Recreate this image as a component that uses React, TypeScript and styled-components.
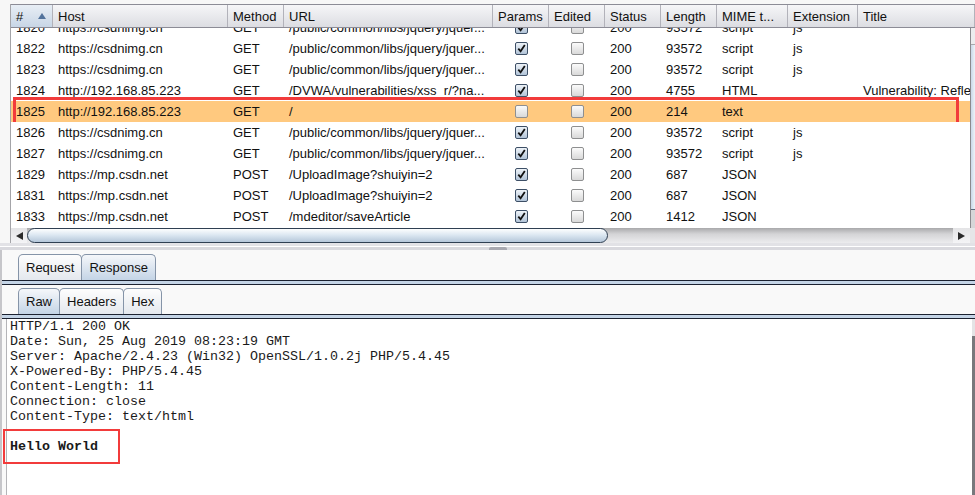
import React from "react";
import styled, { createGlobalStyle } from "styled-components";

const GlobalStyle = createGlobalStyle`
  html, body {
    margin: 0;
    padding: 0;
    background: #f9f9f9;
  }
  body {
    width: 975px;
    height: 495px;
    overflow: hidden;
    font-family: "Liberation Sans", Arial, sans-serif;
  }
  * {
    box-sizing: border-box;
  }
`;

const COLS = "42px 175px 56px 209px 56px 56px 56px 56px 71px 70px 1fr";

const Page = styled.div`
  width: 975px;
  height: 495px;
  display: flex;
  flex-direction: column;
  overflow: hidden;
`;

// 위쪽 히스토리 테이블
const TablePane = styled.div`
  height: 243px;
  padding: 4px 0 0 10px;
  background: #f7f7f7;
  display: flex;
  flex-direction: column;
`;
const Table = styled.div`
  flex: 1;
  display: flex;
  flex-direction: column;
  border-left: 1px solid #a4a4a8;
  background: #fff;
  min-height: 0;
`;
const HeaderRow = styled.div`
  display: grid;
  grid-template-columns: ${COLS};
  height: 24px;
  border-top: 1px solid #8c8c96;
  border-bottom: 1px solid #8c8c96;
  background: linear-gradient(#f6f6f8, #dcdde2);
`;
const HeaderCell = styled.div<{ $sorted?: boolean }>`
  display: flex;
  align-items: center;
  justify-content: space-between;
  padding: 0 6px 0 5px;
  font-size: 13px;
  color: #111;
  white-space: nowrap;
  overflow: hidden;
  border-right: 1px solid #b2b2ba;
  background: ${(p) =>
    p.$sorted ? "linear-gradient(#e8eef5, #c8d6e6)" : "transparent"};
`;
const Body = styled.div`
  height: 200px;
  display: flex;
`;
const Viewport = styled.div`
  flex: 1;
  overflow: hidden;
`;
const RowList = styled.div`
  margin-top: -11px;
`;
const Row = styled.div<{ $selected?: boolean }>`
  display: grid;
  grid-template-columns: ${COLS};
  height: 21px;
  align-items: center;
  position: relative;
  background: ${(p) => (p.$selected ? "#ffc97f" : "#fff")};
  ${(p) =>
    p.$selected &&
    `
    &::after {
      content: "";
      position: absolute;
      left: 2px;
      top: -4px;
      width: 940px;
      height: 28px;
      border: 3px solid #f23b3b;
    }
  `}
`;
const Cell = styled.div`
  padding-left: 5px;
  font-size: 13px;
  line-height: 21px;
  color: #111;
  white-space: nowrap;
  overflow: hidden;
`;
const CheckCell = styled.div`
  display: flex;
  align-items: center;
  justify-content: center;
`;
const Check = styled.span<{ $on: boolean }>`
  width: 13px;
  height: 13px;
  border-radius: 2px;
  display: inline-flex;
  align-items: center;
  justify-content: center;
  border: 1px solid ${(p) => (p.$on ? "#3d4f66" : "#8e8f90")};
  background: ${(p) =>
    p.$on
      ? "linear-gradient(#eef3f8, #b2c4d8)"
      : "linear-gradient(#fbfbfb, #d9d9d9)"};
`;
const VScroll = styled.div`
  width: 5px;
  border-left: 1px solid #8a8a8e;
  display: flex;
  flex-direction: column;
  background: #d6d6d8;
`;
const VScrollButton = styled.div`
  height: 17px;
  background: #ececee;
  border-bottom: 1px solid #a8a8ac;
`;
const VScrollThumb = styled.div`
  height: 165px;
  background: linear-gradient(90deg, #c9d8e8, #eef3f8);
  border-bottom: 1px solid #5a6a7c;
`;
const HScroll = styled.div`
  height: 15px;
  display: flex;
  background: linear-gradient(#a9a9ab, #d4d4d6 40%, #ececee);
`;
const ArrowButton = styled.div<{ $w: number }>`
  width: ${(p) => p.$w}px;
  display: flex;
  align-items: center;
  justify-content: center;
  background: linear-gradient(#e4e4e6, #f4f4f6);
`;
const HThumb = styled.div`
  width: 581px;
  border: 1px solid #2f3f52;
  border-radius: 8px;
  background: linear-gradient(#fdfefe, #dde8f2 45%, #b5c7da);
`;
const HTrack = styled.div`
  flex: 1;
`;
const Corner = styled.div`
  width: 5px;
  background: #e6e6e8;
`;

// 가운데 구분선
const Divider = styled.div`
  height: 7px;
  display: flex;
  background: linear-gradient(#e2e2e6 0 3px, #fff 3px 4px, #d9d9de 4px);
`;
const Handle = styled.div`
  width: 18px;
  height: 3px;
  margin: 4px 0 0 489px;
  border-radius: 2px 2px 0 0;
  background: #a8a8b0;
`;

// 아래쪽 Request / Response
const BottomPane = styled.div`
  flex: 1;
  display: flex;
  flex-direction: column;
  padding-top: 4px;
  background: #f9f9f9;
  border-left: 2px solid #c6c6ca;
  min-height: 0;
`;
const TabBar = styled.div`
  display: flex;
  height: 26px;
  padding-left: 16px;
`;
const Tab = styled.div<{ $active?: boolean }>`
  height: 26px;
  padding: 0 7px;
  margin-right: -1px;
  border: 1px solid #8594a8;
  border-bottom: none;
  border-radius: 5px 5px 0 0;
  font-size: 13px;
  line-height: 25px;
  color: #111;
  background: ${(p) =>
    p.$active
      ? "linear-gradient(#f5f7fa, #c4d4e6)"
      : "linear-gradient(#fdfdfd, #e4e8ee)"};
`;
const TabRule = styled.div<{ $gap: number }>`
  height: 5px;
  border-top: 1px solid #1b2130;
  border-bottom: 1px solid #1b2130;
  background: #c4d4e6;
  margin-bottom: ${(p) => p.$gap}px;
`;
const Content = styled.div`
  flex: 1;
  display: flex;
  margin-left: 4px;
  border-left: 1px solid #b4b4b8;
  background: #fff;
  min-height: 0;
`;
const Raw = styled.pre`
  flex: 1;
  margin: 0;
  padding-left: 3px;
  font-family: "Liberation Mono", "Courier New", monospace;
  font-size: 13.33px;
  line-height: 15px;
  color: #1a1a1a;
`;
const Marked = styled.span`
  position: relative;
  display: inline-block;
  font-weight: bold;
  &::after {
    content: "";
    position: absolute;
    left: -7px;
    top: -10px;
    width: 113px;
    height: 31px;
    border: 2.5px solid #f23b3b;
  }
`;
const ContentScroll = styled.div`
  width: 3px;
  background: linear-gradient(#e4e4e6 0 17px, #78787c 17px);
`;

type Req = {
  id: string;
  host: string;
  method: string;
  url: string;
  params: boolean;
  status: string;
  length: string;
  mime: string;
  ext: string;
  title?: string;
  selected?: boolean;
};

const jq = "/public/common/libs/jquery/jquer...";
const csdn = {
  host: "https://csdnimg.cn",
  method: "GET",
  url: jq,
  params: true,
  status: "200",
  length: "93572",
  mime: "script",
  ext: "js",
};
const mp = {
  host: "https://mp.csdn.net",
  method: "POST",
  params: true,
  status: "200",
  ext: "",
  mime: "JSON",
};

const requests: Req[] = [
  { id: "1820", ...csdn },
  { id: "1822", ...csdn },
  { id: "1823", ...csdn },
  {
    id: "1824",
    host: "http://192.168.85.223",
    method: "GET",
    url: "/DVWA/vulnerabilities/xss_r/?na...",
    params: true,
    status: "200",
    length: "4755",
    mime: "HTML",
    ext: "",
    title: "Vulnerability: Reflected Cross Site Scripting (XSS)",
  },
  {
    id: "1825",
    host: "http://192.168.85.223",
    method: "GET",
    url: "/",
    params: false,
    status: "200",
    length: "214",
    mime: "text",
    ext: "",
    selected: true,
  },
  { id: "1826", ...csdn },
  { id: "1827", ...csdn },
  { id: "1829", ...mp, url: "/UploadImage?shuiyin=2", length: "687" },
  { id: "1831", ...mp, url: "/UploadImage?shuiyin=2", length: "687" },
  { id: "1833", ...mp, url: "/mdeditor/saveArticle", length: "1412" },
];

const headers = [
  "#",
  "Host",
  "Method",
  "URL",
  "Params",
  "Edited",
  "Status",
  "Length",
  "MIME t...",
  "Extension",
  "Title",
];

const Tick = () => (
  <svg width="9" height="9" viewBox="0 0 9 9">
    <path
      d="M1.3 4.6 L3.6 7.3 L7.8 1"
      fill="none"
      stroke="#111"
      strokeWidth="1.8"
    />
  </svg>
);

const Arrow = ({ dir }: { dir: "up" | "left" | "right" }) => {
  if (dir === "up")
    return (
      <svg width="8" height="6" viewBox="0 0 8 6">
        <path d="M0 6 L4 0 L8 6 Z" fill="#52739c" />
      </svg>
    );
  return (
    <svg width="7" height="8" viewBox="0 0 7 8">
      <path
        d={dir === "left" ? "M7 0 L0 4 L7 8 Z" : "M0 0 L7 4 L0 8 Z"}
        fill="#2a2a2a"
      />
    </svg>
  );
};

const App = () => {
  return (
    <Page>
      <GlobalStyle />
      <TablePane>
        <Table>
          <HeaderRow>
            {headers.map((h, i) => (
              <HeaderCell key={h} $sorted={i === 0}>
                {h}
                {i === 0 && <Arrow dir="up" />}
              </HeaderCell>
            ))}
          </HeaderRow>
          <Body>
            <Viewport>
              <RowList>
                {requests.map((r) => (
                  <Row key={r.id} $selected={r.selected}>
                    <Cell>{r.id}</Cell>
                    <Cell>{r.host}</Cell>
                    <Cell>{r.method}</Cell>
                    <Cell>{r.url}</Cell>
                    <CheckCell>
                      <Check $on={r.params}>{r.params && <Tick />}</Check>
                    </CheckCell>
                    <CheckCell>
                      <Check $on={false} />
                    </CheckCell>
                    <Cell>{r.status}</Cell>
                    <Cell>{r.length}</Cell>
                    <Cell>{r.mime}</Cell>
                    <Cell>{r.ext}</Cell>
                    <Cell>{r.title}</Cell>
                  </Row>
                ))}
              </RowList>
            </Viewport>
            <VScroll>
              <VScrollButton />
              <VScrollThumb />
            </VScroll>
          </Body>
          <HScroll>
            <ArrowButton $w={16}>
              <Arrow dir="left" />
            </ArrowButton>
            <HThumb />
            <HTrack />
            <ArrowButton $w={17}>
              <Arrow dir="right" />
            </ArrowButton>
            <Corner />
          </HScroll>
        </Table>
      </TablePane>
      <Divider>
        <Handle />
      </Divider>
      <BottomPane>
        <TabBar>
          <Tab>Request</Tab>
          <Tab $active>Response</Tab>
        </TabBar>
        <TabRule $gap={3} />
        <TabBar>
          <Tab $active>Raw</Tab>
          <Tab>Headers</Tab>
          <Tab>Hex</Tab>
        </TabBar>
        <TabRule $gap={0} />
        <Content>
          <Raw>
            {`HTTP/1.1 200 OK
Date: Sun, 25 Aug 2019 08:23:19 GMT
Server: Apache/2.4.23 (Win32) OpenSSL/1.0.2j PHP/5.4.45
X-Powered-By: PHP/5.4.45
Content-Length: 11
Connection: close
Content-Type: text/html

`}
            <Marked>Hello World</Marked>
          </Raw>
          <ContentScroll />
        </Content>
      </BottomPane>
    </Page>
  );
};

export default App;
